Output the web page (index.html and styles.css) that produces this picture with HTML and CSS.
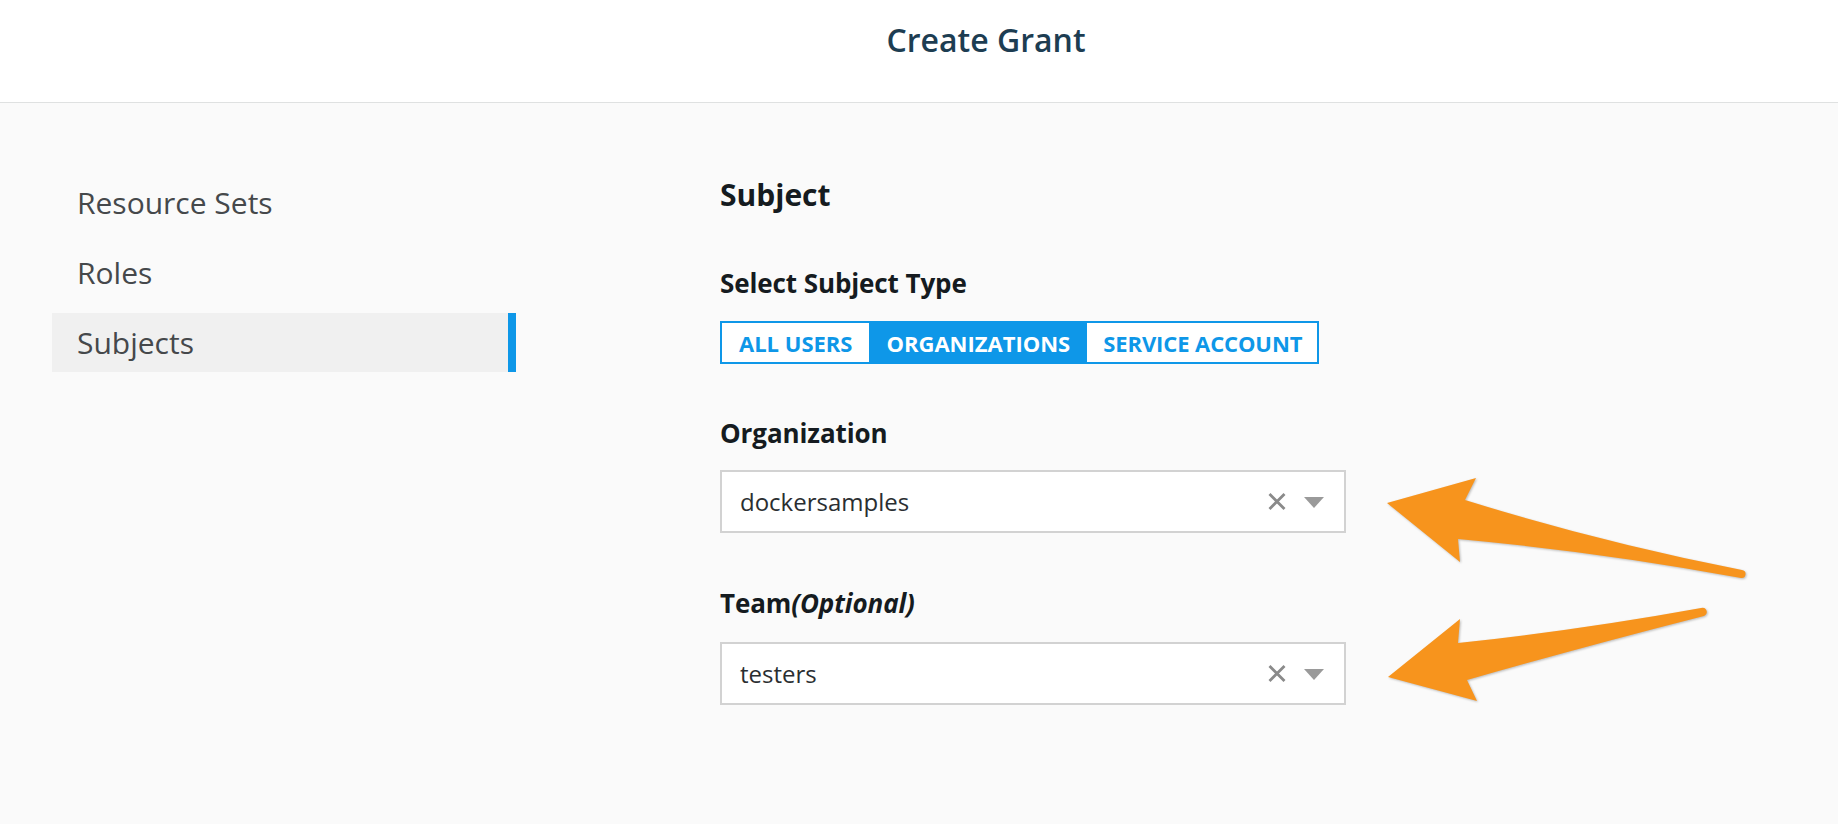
FILE: index.html
```html
<!DOCTYPE html>
<html>
<head>
<meta charset="utf-8">
<link rel="stylesheet" href="styles.css">
</head>
<body>
<header class="topbar">
  <h1 class="title">Create Grant</h1>
</header>
<div class="layout">
  <nav class="sidenav">
    <div class="nav-item">Resource Sets</div>
    <div class="nav-item">Roles</div>
    <div class="nav-item active">Subjects</div>
  </nav>
  <main class="main">
    <h2 class="section-title">Subject</h2>
    <div class="label label-type">Select Subject Type</div>
    <div class="seg">
      <div class="seg-btn">ALL USERS</div>
      <div class="seg-btn on">ORGANIZATIONS</div>
      <div class="seg-btn last">SERVICE ACCOUNT</div>
    </div>
    <div class="label label-org">Organization</div>
    <div class="select">
      <span class="select-value">dockersamples</span>
      <svg class="clear" width="18" height="17" viewBox="0 0 18 17"><path d="M1.5 1 L16.5 16 M16.5 1 L1.5 16" stroke="#8a8a8a" stroke-width="2.8" fill="none"/></svg>
      <svg class="caret" width="20" height="11" viewBox="0 0 20 11"><path d="M0 0 H20 L10 11 Z" fill="#9a9a9a"/></svg>
    </div>
    <div class="label label-team">Team<em>(Optional)</em></div>
    <div class="select select-team">
      <span class="select-value">testers</span>
      <svg class="clear" width="18" height="17" viewBox="0 0 18 17"><path d="M1.5 1 L16.5 16 M16.5 1 L1.5 16" stroke="#8a8a8a" stroke-width="2.8" fill="none"/></svg>
      <svg class="caret" width="20" height="11" viewBox="0 0 20 11"><path d="M0 0 H20 L10 11 Z" fill="#9a9a9a"/></svg>
    </div>
  </main>
</div>
<svg class="arrows" width="1838" height="824" viewBox="0 0 1838 824">
  <path d="M1387 503 L1476 478 L1465 500 Q1600 542 1742 570 A4 4 0 0 1 1741 578 Q1600 552 1458 539 L1460 562 Z" fill="#f7941d"/>
  <path d="M1388 677 L1460 619 L1458 643 Q1580 630 1701 608 A4 4 0 0 1 1704 616 Q1590 645 1467 680 L1477 701 Z" fill="#f7941d"/>
</svg>
</body>
</html>
```
FILE: styles.css
```css
* { box-sizing: border-box; }
html, body {
  margin: 0;
  padding: 0;
}
body {
  width: 1838px;
  height: 824px;
  background: #fafafa;
  font-family: "Open Sans", "Liberation Sans", sans-serif;
  position: relative;
  overflow: hidden;
}
.topbar {
  height: 103px;
  background: #ffffff;
  border-bottom: 1px solid #dfe1e1;
  display: flex;
  align-items: flex-start;
  justify-content: center;
  padding-left: 134px;
  padding-top: 18px;
}
.title {
  margin: 0;
  font-size: 32px;
  font-weight: 600;
  color: #1d3d52;
  line-height: 44px;
}
.layout {
  display: flex;
  padding-left: 52px;
}
.sidenav {
  width: 464px;
  padding-top: 70px;
  display: flex;
  flex-direction: column;
  gap: 11px;
}
.nav-item {
  height: 59px;
  display: flex;
  align-items: center;
  padding-left: 25px;
  font-size: 30px;
  color: #45484b;
  line-height: 41px;
}
.nav-item.active {
  background: #f0f0f0;
  border-right: 8px solid #0e97e8;
}
.main {
  margin-left: 204px;
  padding-top: 71px;
  display: flex;
  flex-direction: column;
  align-items: flex-start;
}
.section-title {
  margin: 0;
  font-size: 30px;
  font-weight: 700;
  line-height: 41px;
  color: #151b20;
}
.label {
  font-size: 26px;
  font-weight: 700;
  line-height: 35px;
  color: #151b20;
  letter-spacing: -0.1px;
}
.label em {
  font-style: italic;
}
.label-type {
  margin-top: 51px;
}
.seg {
  margin-top: 20px;
  display: flex;
  height: 43px;
  border: 2px solid #0e97e8;
  background: #ffffff;
}
.seg-btn {
  display: flex;
  align-items: center;
  padding: 0 17px;
  font-size: 22px;
  font-weight: 700;
  color: #0e97e8;
}
.seg-btn.last {
  padding: 0 15px 0 16px;
  letter-spacing: -0.1px;
}
.seg-btn.on {
  background: #0e97e8;
  color: #ffffff;
}
.label-org {
  margin-top: 52px;
}
.label-team {
  margin-top: 53px;
}
.select {
  margin-top: 19px;
  width: 626px;
  height: 63px;
  border: 2px solid #d2d2d2;
  background: #ffffff;
  display: flex;
  align-items: center;
  padding: 0 20px 0 18px;
}
.select-team {
  margin-top: 21px;
}
.select-value {
  flex: 1;
  font-size: 24px;
  color: #2a2e31;
  line-height: 33px;
}
.clear {
  display: block;
  margin-right: 18px;
}
.caret {
  display: block;
  margin-top: 2px;
}
.arrows {
  position: absolute;
  left: 0;
  top: 0;
  pointer-events: none;
  filter: drop-shadow(1px 1px 1px rgba(0,0,0,0.25));
}
```
